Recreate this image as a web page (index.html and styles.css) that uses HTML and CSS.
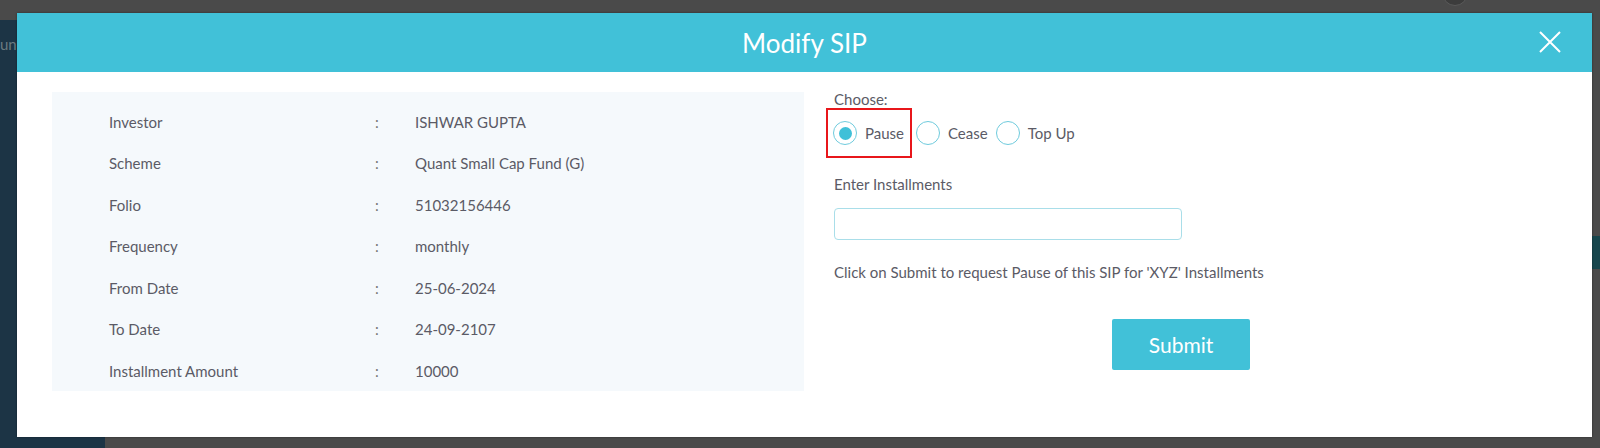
FILE: index.html
```html
<!DOCTYPE html>
<html lang="en">
<head>
<meta charset="utf-8">
<title>Modify SIP</title>
<link rel="stylesheet" href="styles.css">
</head>
<body>
<div class="backdrop">
  <div class="sidebar"><span class="side-text">und</span></div>
  <div class="avatar"></div>
  <div class="right-block"></div>
</div>

<div class="modal">
  <div class="modal-header">
    <h1 class="modal-title">Modify SIP</h1>
    <button class="close-btn" aria-label="Close">
      <svg width="22" height="22" viewBox="0 0 22 22"><path d="M1 1 L21 21 M21 1 L1 21" stroke="#fff" stroke-width="2" fill="none"/></svg>
    </button>
  </div>
  <div class="modal-body">
    <div class="details">
      <div class="row"><span class="label">Investor</span><span class="colon">:</span><span class="value">ISHWAR GUPTA</span></div>
      <div class="row"><span class="label">Scheme</span><span class="colon">:</span><span class="value">Quant Small Cap Fund (G)</span></div>
      <div class="row"><span class="label">Folio</span><span class="colon">:</span><span class="value">51032156446</span></div>
      <div class="row"><span class="label">Frequency</span><span class="colon">:</span><span class="value">monthly</span></div>
      <div class="row"><span class="label">From Date</span><span class="colon">:</span><span class="value">25-06-2024</span></div>
      <div class="row"><span class="label">To Date</span><span class="colon">:</span><span class="value">24-09-2107</span></div>
      <div class="row"><span class="label">Installment Amount</span><span class="colon">:</span><span class="value">10000</span></div>
    </div>
    <div class="form">
      <div class="choose">Choose:</div>
      <div class="radios">
        <label class="radio highlighted"><span class="circle checked"></span><span class="radio-text">Pause</span></label>
        <label class="radio"><span class="circle"></span><span class="radio-text">Cease</span></label>
        <label class="radio"><span class="circle"></span><span class="radio-text">Top Up</span></label>
      </div>
      <div class="field-label">Enter Installments</div>
      <input class="text-input" type="text">
      <p class="help">Click on Submit to request Pause of this SIP for 'XYZ' Installments</p>
      <div class="actions"><button class="submit">Submit</button></div>
    </div>
  </div>
</div>
</body>
</html>
```

FILE: styles.css
```css
* { box-sizing: border-box; }
html, body { margin: 0; padding: 0; }
body {
  width: 1600px;
  height: 448px;
  background: #4a4a4a;
  font-family: Lato, "Open Sans", sans-serif;
  overflow: hidden;
  position: relative;
}
.backdrop { position: absolute; inset: 0; }
.sidebar {
  position: absolute;
  left: 0; top: 20px;
  width: 105px; height: 428px;
  background: #1c3445;
  overflow: hidden;
}
.side-text {
  position: absolute;
  left: 0; top: 15px;
  color: #6b7a80;
  font-size: 15px;
}
.avatar {
  position: absolute;
  left: 1442px; top: -20px;
  width: 26px; height: 26px;
  border-radius: 50%;
  background: #3c3c3c;
  border: 1px solid #5a5a5a;
}
.right-block {
  position: absolute;
  left: 1592px; top: 236px;
  width: 8px; height: 33px;
  background: #17464d;
}

.modal {
  position: absolute;
  left: 17px; top: 13px;
  width: 1575px; height: 424px;
  background: #fff;
  box-shadow: 0 0 2px rgba(0,0,0,0.4);
}
.modal-header {
  height: 59px;
  background: #41c1d8;
  display: flex;
  align-items: center;
  justify-content: center;
  position: relative;
}
.modal-title {
  margin: 0;
  color: #fff;
  font-weight: 400;
  font-size: 26px;
  line-height: 1;
}
.close-btn {
  position: absolute;
  right: 31px; top: 18px;
  background: none; border: 0; padding: 0;
  width: 22px; height: 22px;
  display: block;
}
.close-btn svg { display: block; }

.modal-body {
  display: flex;
  padding: 20px 0 0 35px;
  gap: 30px;
}
.details {
  width: 752px;
  height: 299px;
  background: #f5f9fc;
  padding-top: 9px;
  color: #5b5b66;
  font-size: 15px;
}
.row {
  display: grid;
  grid-template-columns: 266px 40px 1fr;
  height: 41.5px;
  align-items: center;
  padding-left: 57px;
}
.colon { color: #777; }

.form {
  color: #5b5b66;
  font-size: 15px;
}
.choose { line-height: 18px; margin-top: -2px; }
.radios {
  display: flex;
  align-items: center;
  margin-top: 0;
  margin-left: -8px;
}
.radio {
  display: flex;
  align-items: center;
  height: 50px;
  padding: 0 2px;
  border: 2px solid transparent;
}
.radio.highlighted {
  border-color: #e8161b;
  padding: 0 6px 0 5px;
  margin-right: 0;
}
.circle {
  width: 24px; height: 24px;
  border-radius: 50%;
  border: 1px solid #6fcbdd;
  background: #fff;
  display: flex;
  align-items: center;
  justify-content: center;
  margin-right: 8px;
}
.circle.checked::after {
  content: "";
  width: 13px; height: 13px;
  border-radius: 50%;
  background: #3fc0d8;
}
.radio-text { line-height: 18px; }

.field-label { margin-top: 17px; line-height: 18px; }
.text-input {
  display: block;
  margin-top: 15px;
  width: 348px;
  height: 32px;
  border: 1px solid #a9dee9;
  border-radius: 4px;
  background: #fff;
}
.help {
  margin: 23px 0 0;
  font-size: 15px;
  line-height: 18px;
}
.actions {
  display: flex;
  justify-content: flex-start;
  padding-left: 278px;
  margin-top: 38px;
}
.submit {
  width: 138px; height: 51px;
  border: 0;
  border-radius: 2px;
  background: #41c1d8;
  color: #fff;
  font-family: Lato, sans-serif;
  font-size: 21px;
}
```
